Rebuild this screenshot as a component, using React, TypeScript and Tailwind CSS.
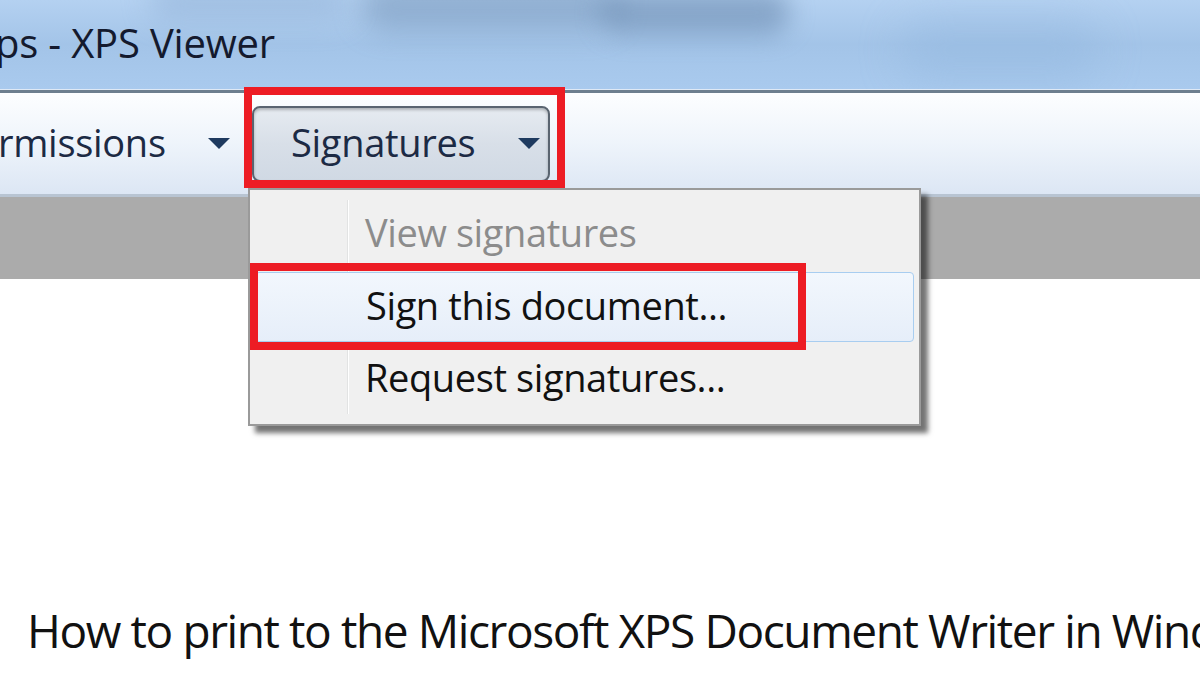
import React from 'react';

const Caret: React.FC<{ className?: string }> = ({ className }) => (
  <svg viewBox="0 0 24 12" className={className}>
    <path d="M0 0 H24 L12 12 Z" fill="#1e3a5f" />
  </svg>
);

const App: React.FC = () => {
  return (
    <div
      className="relative w-[1200px] h-[675px] overflow-hidden bg-white"
      style={{ fontFamily: '"Open Sans", "Noto Sans", sans-serif' }}
    >
      {/* Title bar */}
      <div className="relative h-[89px] overflow-hidden bg-gradient-to-b from-[#b4d1f1] via-[#a3c4e8] to-[#a9caee]">
        <div className="absolute left-[360px] top-[-20px] w-[260px] h-[50px] rounded-full bg-[#5f7fa6]/40 blur-[14px]" />
        <div className="absolute left-[600px] top-[-10px] w-[190px] h-[45px] rounded-full bg-[#5f7fa6]/50 blur-[12px]" />
        <div className="absolute left-[150px] top-[-20px] w-[200px] h-[40px] rounded-full bg-[#8fb0d6]/50 blur-[14px]" />
        <div className="absolute left-[900px] top-[20px] w-[200px] h-[60px] rounded-full bg-[#8fb3dc]/40 blur-[20px]" />
        <div className="relative flex h-full items-center pb-[4px] -ml-[5px]">
          <span className="text-[40px] tracking-[-0.2px] text-[#141a2e] leading-none">ps - XPS Viewer</span>
        </div>
      </div>
      <div className="h-[1px] bg-[#dfe9f5]" />
      <div className="h-[3px] bg-[#6e7f8f]" />

      {/* Toolbar */}
      <div className="flex h-[104px] items-center bg-gradient-to-b from-[#fdfeff] via-[#eef4fb] to-[#dce6f4] border-b-[3px] border-[#b8c4d2]">
        <div className="flex w-[236px] items-center -ml-[2px]">
          <span className="text-[38px] tracking-[-0.3px] text-[#1c2a44] leading-none pb-[4px]">rmissions</span>
          <Caret className="ml-auto mr-[4px] w-[22px] h-[11px]" />
        </div>
        <div className="ml-[18px] flex h-[76px] w-[298px] items-center rounded-[8px] border-2 border-[#5a6470] bg-gradient-to-b from-[#e6ebf1] via-[#d8dfe8] to-[#d0d9e4] shadow-[inset_0_2px_3px_rgba(0,0,0,0.25)]">
          <span className="ml-[37px] text-[38px] tracking-[-0.3px] text-[#1c2a44] leading-none pb-[4px]">Signatures</span>
          <Caret className="ml-auto mr-[8px] w-[22px] h-[11px]" />
        </div>
      </div>

      {/* Grey band */}
      <div className="h-[82px] bg-[#ababab]" />

      {/* Document content */}
      <div className="pt-[328px] pl-[27px]">
        <p className="whitespace-nowrap text-[46px] tracking-[-1.4px] text-[#111] leading-none">
          How to print to the Microsoft XPS Document Writer in Windows
        </p>
      </div>

      {/* Highlight around Signatures button */}
      <div className="absolute left-[244px] top-[87px] w-[321px] h-[101px] border-[8px] border-[#ed1c24]" />

      {/* Dropdown menu */}
      <div className="absolute left-[248px] top-[188px] w-[673px] h-[238px] border-2 border-[#9a9a9a] bg-[#f0f0f0] shadow-[7px_7px_5px_rgba(0,0,0,0.55)]">
        <div className="absolute left-[97px] top-[10px] bottom-[10px] w-[2px] bg-[#e2e3e3] border-r border-white" />
        <div className="relative flex h-full flex-col pt-[10px]">
          <div className="flex h-[72px] items-center pl-[115px] pb-[8px]">
            <span className="text-[38px] tracking-[-0.4px] text-[#8c8c8c] leading-none">View signatures</span>
          </div>
          <div className="mx-[5px] flex h-[70px] items-center rounded-[4px] border border-[#a8cdf0] bg-gradient-to-b from-[#f2f7fd] to-[#e6eef9] pl-[110px]">
            <span className="text-[38px] tracking-[-0.4px] text-[#111] leading-none pb-[4px]">Sign this document...</span>
          </div>
          <div className="flex h-[74px] items-center pl-[115px]">
            <span className="text-[38px] tracking-[-0.4px] text-[#111] leading-none pb-[4px]">Request signatures...</span>
          </div>
        </div>
      </div>

      {/* Highlight around Sign this document */}
      <div className="absolute left-[250px] top-[263px] w-[556px] h-[87px] border-[8px] border-[#ed1c24]" />
    </div>
  );
};

export default App;
